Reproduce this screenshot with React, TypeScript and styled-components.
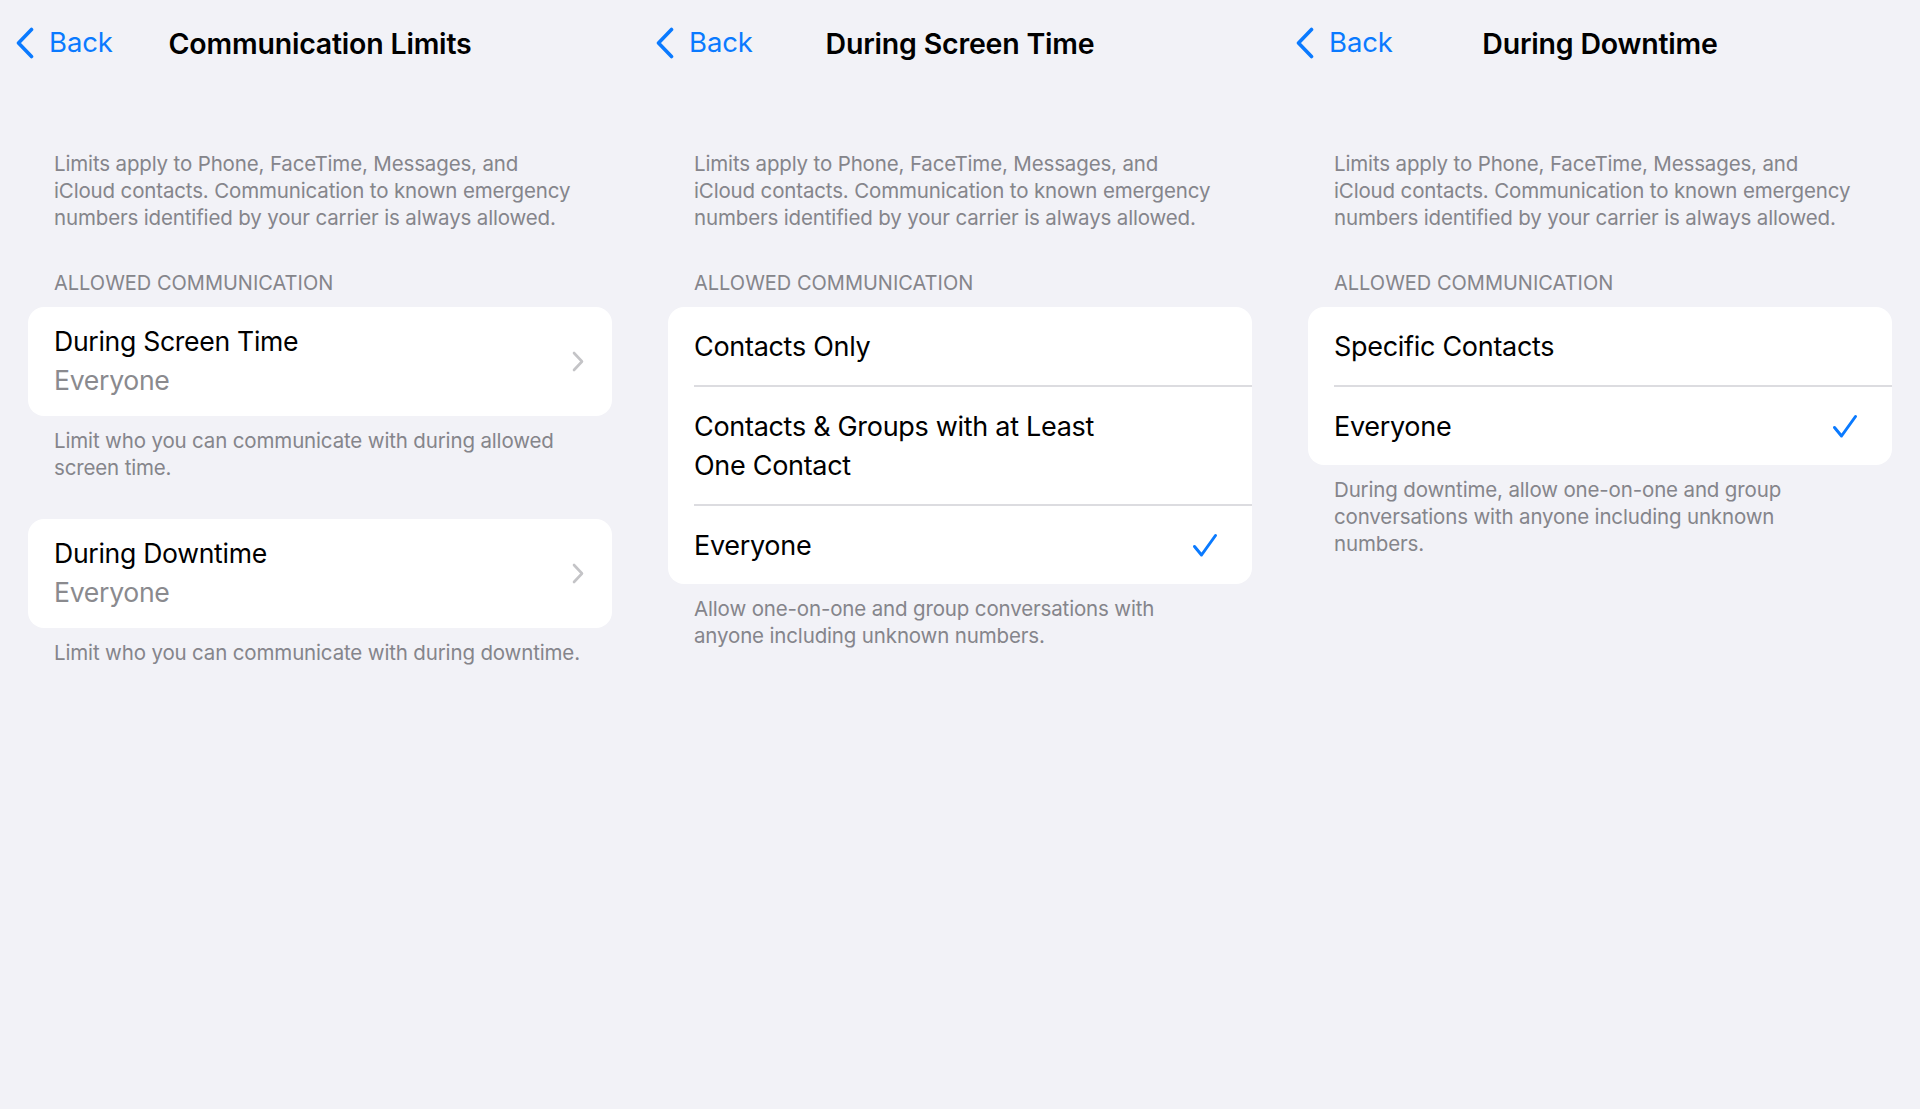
import React from "react";
import styled, { createGlobalStyle } from "styled-components";

const GlobalStyle = createGlobalStyle`
  html, body {
    margin: 0;
    padding: 0;
    background: #f2f2f7;
  }
  body {
    font-family: Inter, "Noto Sans", "Liberation Sans", sans-serif;
    -webkit-font-smoothing: antialiased;
  }
  * { box-sizing: border-box; }
`;

const Screen = styled.div`
  display: grid;
  grid-template-columns: repeat(3, 640px);
  width: 1920px;
  height: 1109px;
  background: #f2f2f7;
  overflow: hidden;
`;

const Panel = styled.section`
  display: flex;
  flex-direction: column;
`;

const NavBar = styled.header`
  display: grid;
  grid-template-columns: 1fr auto 1fr;
  align-items: center;
  height: 86px;
`;

const BackButton = styled.button`
  display: flex;
  align-items: center;
  gap: 14px;
  justify-self: start;
  padding: 0 0 0 15px;
  margin: 0;
  border: none;
  background: none;
  color: #0a7aff;
  font-family: inherit;
  font-size: 27.5px;
  letter-spacing: -0.1px;
  line-height: 1;
  cursor: pointer;
`;

const Title = styled.h1`
  margin: 0;
  font-size: 28.5px;
  font-weight: 600;
  letter-spacing: -0.2px;
  color: #000;
`;

const Content = styled.div`
  display: flex;
  flex-direction: column;
  padding: 64px 28px 0;
`;

const Note = styled.p<{ $gapAfter?: number; $maxText?: number }>`
  margin: 0 0 ${(p) => p.$gapAfter ?? 0}px;
  padding: 0 16px 0 26px;
  max-width: ${(p) => (p.$maxText ? `${p.$maxText + 42}px` : "none")};
  font-size: 20.5px;
  line-height: 27px;
  letter-spacing: -0.15px;
  color: #85858b;
`;

const SectionHeader = styled.h2`
  margin: 0 0 10px;
  padding: 0 26px;
  font-size: 20px;
  font-weight: 400;
  line-height: 27px;
  letter-spacing: 0px;
  text-transform: uppercase;
  color: #85858b;
`;

const Card = styled.div`
  display: flex;
  flex-direction: column;
  background: #fff;
  border-radius: 16px;
  overflow: hidden;
  margin-bottom: 11px;
`;

const NavRow = styled.div`
  display: flex;
  align-items: center;
  justify-content: space-between;
  padding: 15px 28px 16px 26px;
`;

const RowText = styled.div`
  display: flex;
  flex-direction: column;
`;

const RowTitle = styled.span`
  font-size: 26.6px;
  line-height: 39px;
  letter-spacing: -0.3px;
  color: #000;
`;

const RowValue = styled.span`
  font-size: 26.6px;
  line-height: 39px;
  letter-spacing: -0.3px;
  color: #8a8a8e;
`;

const OptionRow = styled.div<{ $last?: boolean }>`
  display: flex;
  align-items: center;
  justify-content: space-between;
  margin-left: 26px;
  padding: 20px 34px 19px 0;
  border-bottom: ${(p) => (p.$last ? "none" : "2px solid #dcdce0")};
`;

const OptionLabel = styled.span`
  max-width: 420px;
  font-size: 27px;
  line-height: 39px;
  letter-spacing: -0.3px;
  color: #000;
`;

const BackChevron = () => (
  <svg width="20" height="32" viewBox="0 0 20 32" fill="none">
    <path
      d="M16.5 2.5 L3.5 16 L16.5 29.5"
      stroke="#0a7aff"
      strokeWidth="3.6"
      strokeLinecap="round"
      strokeLinejoin="round"
    />
  </svg>
);

const Disclosure = () => (
  <svg width="12" height="21" viewBox="0 0 12 21" fill="none">
    <path
      d="M2 2 L10 10.5 L2 19"
      stroke="#c4c4c7"
      strokeWidth="2.6"
      strokeLinecap="round"
      strokeLinejoin="round"
    />
  </svg>
);

const Check = () => (
  <svg width="26" height="25" viewBox="0 0 26 25" fill="none">
    <path
      d="M2.5 13.5 L9.5 22 L23.5 2.5"
      stroke="#0a7aff"
      strokeWidth="3"
      strokeLinecap="round"
      strokeLinejoin="round"
    />
  </svg>
);

const Nav = ({ title }: { title: string }) => (
  <NavBar>
    <BackButton>
      <BackChevron />
      Back
    </BackButton>
    <Title>{title}</Title>
    <span />
  </NavBar>
);

const INTRO =
  "Limits apply to Phone, FaceTime, Messages, and iCloud contacts. Communication to known emergency numbers identified by your carrier is always allowed.";

const IntroNote = () => (
  <Note $gapAfter={39} $maxText={526}>
    {INTRO}
  </Note>
);

type Option = { label: string; checked?: boolean };

const OptionsCard = ({ options }: { options: Option[] }) => (
  <Card>
    {options.map((o, i) => (
      <OptionRow key={o.label} $last={i === options.length - 1}>
        <OptionLabel>{o.label}</OptionLabel>
        {o.checked && <Check />}
      </OptionRow>
    ))}
  </Card>
);

export default function App() {
  return (
    <>
      <GlobalStyle />
      <Screen>
        <Panel>
          <Nav title="Communication Limits" />
          <Content>
            <IntroNote />
            <SectionHeader>Allowed Communication</SectionHeader>
            <Card>
              <NavRow>
                <RowText>
                  <RowTitle>During Screen Time</RowTitle>
                  <RowValue>Everyone</RowValue>
                </RowText>
                <Disclosure />
              </NavRow>
            </Card>
            <Note $gapAfter={38}>
              Limit who you can communicate with during allowed screen time.
            </Note>
            <Card>
              <NavRow>
                <RowText>
                  <RowTitle>During Downtime</RowTitle>
                  <RowValue>Everyone</RowValue>
                </RowText>
                <Disclosure />
              </NavRow>
            </Card>
            <Note>Limit who you can communicate with during downtime.</Note>
          </Content>
        </Panel>

        <Panel>
          <Nav title="During Screen Time" />
          <Content>
            <IntroNote />
            <SectionHeader>Allowed Communication</SectionHeader>
            <OptionsCard
              options={[
                { label: "Contacts Only" },
                { label: "Contacts & Groups with at Least One Contact" },
                { label: "Everyone", checked: true },
              ]}
            />
            <Note $maxText={500}>
              Allow one-on-one and group conversations with anyone including
              unknown numbers.
            </Note>
          </Content>
        </Panel>

        <Panel>
          <Nav title="During Downtime" />
          <Content>
            <IntroNote />
            <SectionHeader>Allowed Communication</SectionHeader>
            <OptionsCard
              options={[
                { label: "Specific Contacts" },
                { label: "Everyone", checked: true },
              ]}
            />
            <Note $maxText={500}>
              During downtime, allow one-on-one and group conversations with
              anyone including unknown numbers.
            </Note>
          </Content>
        </Panel>
      </Screen>
    </>
  );
}
